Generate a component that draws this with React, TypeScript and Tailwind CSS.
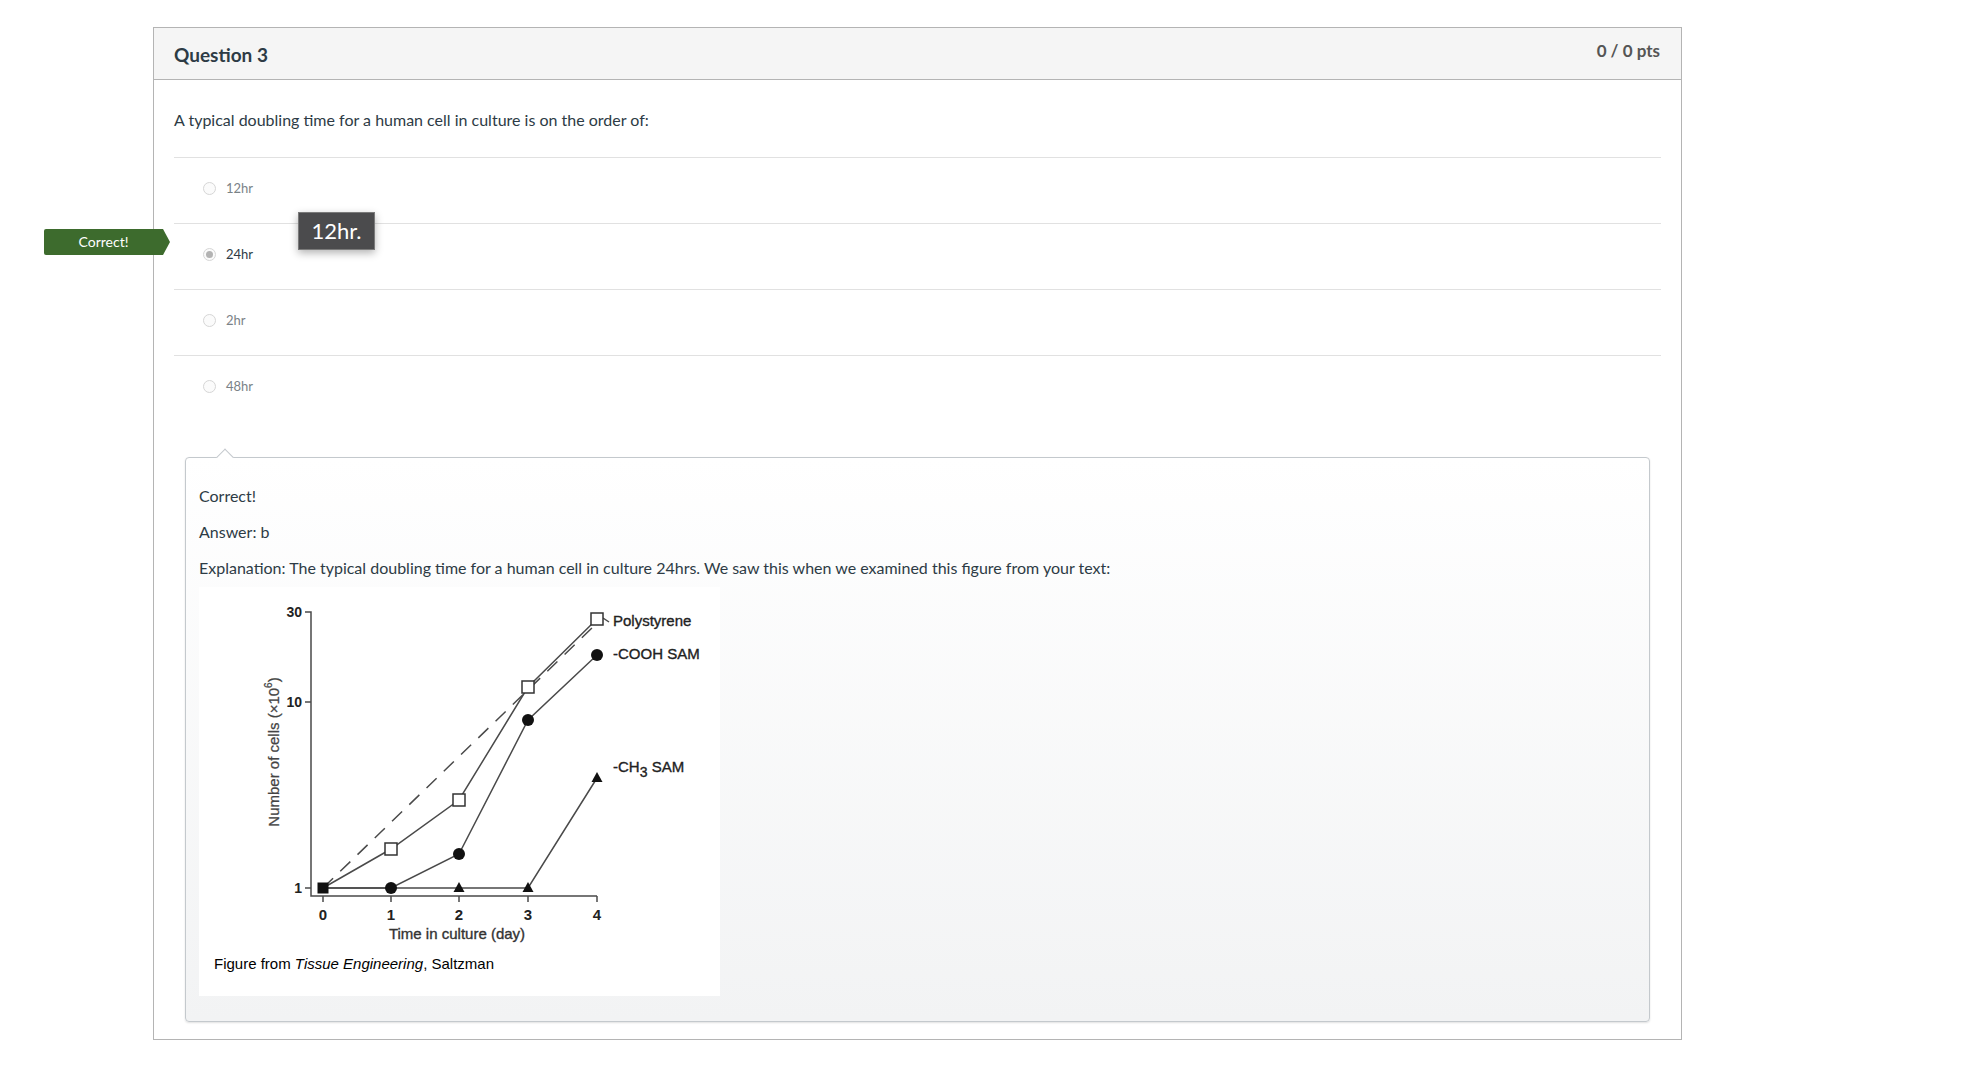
import React from 'react';

const chartFont = '"Liberation Sans", Arial, sans-serif';

const days = [323, 391, 459, 528, 597];
const polystyrene = [887, 848, 799, 686, 618];
const cooh = [887, 887, 853, 719, 654];
const ch3 = [887, 887, 887, 887, 777];

const toPoints = (ys: number[]) => ys.map((y, i) => `${days[i]},${y}`).join(' ');

const GrowthChart: React.FC = () => (
  <svg width={521} height={409} viewBox="199 586 521 409" className="block">
    <rect x={199} y={586} width={521} height={409} fill="#ffffff" />
    <g stroke="#4a4a4a" strokeWidth={1.5} fill="none">
      {/* axes */}
      <polyline points="305,611 311,611 311,895 597,895" />
      <line x1={305} y1={701} x2={311} y2={701} />
      <line x1={305} y1={887} x2={311} y2={887} />
      {days.map((x) => (
        <line key={x} x1={x} y1={895} x2={x} y2={901} />
      ))}
      {/* series */}
      <line x1={323} y1={887} x2={592} y2={627} strokeDasharray="14 10" />
      <polyline points={toPoints(polystyrene)} />
      <polyline points={toPoints(cooh)} />
      <polyline points={toPoints(ch3)} />
      <line x1={603} y1={617} x2={609} y2={621} />
    </g>
    {/* markers */}
    <rect x={317.5} y={881.5} width={11} height={11} fill="#111" />
    {polystyrene.slice(1).map((y, i) => (
      <rect key={i} x={days[i + 1] - 6} y={y - 6} width={12} height={12} fill="#fff" stroke="#333" strokeWidth={1.5} />
    ))}
    {cooh.slice(1).map((y, i) => (
      <circle key={i} cx={days[i + 1]} cy={y} r={6} fill="#111" />
    ))}
    {ch3.slice(2).map((y, i) => (
      <polygon key={i} points={`${days[i + 2]},${y - 6} ${days[i + 2] + 5.5},${y + 4} ${days[i + 2] - 5.5},${y + 4}`} fill="#111" />
    ))}
    {/* labels */}
    <g fontFamily={chartFont} fill="#222" fontWeight={700} fontSize={14} textAnchor="end" dominantBaseline="central">
      <text x={302} y={611}>30</text>
      <text x={302} y={701}>10</text>
      <text x={302} y={887}>1</text>
    </g>
    <g fontFamily={chartFont} fill="#222" fontWeight={700} fontSize={15} textAnchor="middle" dominantBaseline="central">
      {days.map((x, i) => (
        <text key={x} x={x} y={913}>{i}</text>
      ))}
    </g>
    <text
      x={457}
      y={932}
      fontFamily={chartFont}
      fontSize={15}
      fill="#333"
      stroke="#333"
      strokeWidth={0.35}
      textAnchor="middle"
      dominantBaseline="central"
    >
      Time in culture (day)
    </text>
    <text
      x={273}
      y={751}
      transform="rotate(-90 273 751)"
      fontFamily={chartFont}
      fontSize={15}
      fill="#444"
      stroke="#444"
      strokeWidth={0.25}
      textAnchor="middle"
      dominantBaseline="central"
    >
      Number of cells (×10<tspan dy={-5} fontSize={10}>6</tspan><tspan dy={5}>)</tspan>
    </text>
    <g fontFamily={chartFont} fontSize={15} fill="#222" stroke="#222" strokeWidth={0.35} dominantBaseline="central">
      <text x={613} y={619}>Polystyrene</text>
      <text x={613} y={652}>-COOH SAM</text>
      <text x={613} y={765}>
        -CH<tspan dy={6} fontSize={14}>3</tspan>
        <tspan dy={-6}> SAM</tspan>
      </text>
    </g>
    <text x={214} y={962} fontFamily={chartFont} fontSize={15} fill="#000" dominantBaseline="central">
      Figure from <tspan fontStyle="italic">Tissue Engineering</tspan>, Saltzman
    </text>
  </svg>
);

const Radio: React.FC<{ checked?: boolean }> = ({ checked }) => (
  <span className="w-[13px] h-[13px] rounded-full border border-[#d6d6d6] bg-[#fbfbfb] flex items-center justify-center shrink-0">
    {checked && <span className="w-[7px] h-[7px] rounded-full bg-[#b3b3b3]" />}
  </span>
);

const answers = [
  { label: '12hr', checked: false },
  { label: '24hr', checked: true },
  { label: '2hr', checked: false },
  { label: '48hr', checked: false },
];

export default function App() {
  return (
    <div className="min-h-screen bg-white font-['Lato','Noto_Sans',sans-serif] text-[#2d3b45]">
      <div className="pt-[27px] pl-[153px]">
        <div className="relative w-[1529px] border border-[#b4b4b4]">
          {/* header */}
          <div className="h-[52px] bg-[#f5f5f5] border-b border-[#b4b4b4] flex justify-between pl-[20px] pr-[21px]">
            <h2 className="pt-[15px] text-[19px] leading-[23px] font-bold text-[#2d3b45]">Question 3</h2>
            <span className="pt-[12px] text-[17px] leading-[21px] font-bold text-[#555]">0 / 0 pts</span>
          </div>

          <div className="pl-[20px] pr-[20px] pb-[17px]">
            <p className="pt-[28px] pb-[25px] text-[16px] leading-[24px]">
              A typical doubling time for a human cell in culture is on the order of:
            </p>

            <div>
              {answers.map((a) => (
                <div key={a.label} className="h-[66px] border-t border-[#e1e1e1] pt-[20px] pl-[29px] flex items-start">
                  <div className="flex items-center gap-[10px] h-[20px]">
                    <Radio checked={a.checked} />
                    <span className={`text-[13px] leading-[20px] ${a.checked ? 'text-[#2d3b45]' : 'text-[#7a8287]'}`}>{a.label}</span>
                  </div>
                </div>
              ))}
            </div>

            {/* feedback */}
            <div className="relative mt-[36px] ml-[11px] mr-[11px] rounded-[4px] border border-[#c4c9cd] bg-linear-to-b from-white to-[#f2f3f4] shadow-[0_1px_2px_rgba(0,0,0,0.12)] pl-[13px] pt-[26px] pb-[25px]">
              <span className="absolute left-[33px] -top-[7px] w-[12px] h-[12px] rotate-45 bg-white border-l border-t border-[#c4c9cd]" />
              <p className="text-[16px] leading-[24px] mb-[12px]">Correct!</p>
              <p className="text-[16px] leading-[24px] mb-[12px]">Answer: b</p>
              <p className="text-[16px] leading-[24px]">
                Explanation: The typical doubling time for a human cell in culture 24hrs. We saw this when we examined this figure from your text:
              </p>
              <div className="mt-[7px]">
                <GrowthChart />
              </div>
            </div>
          </div>

          {/* correct answer marker */}
          <div className="absolute left-[-110px] top-[201px] w-[126px] h-[26px] bg-[#3d6b2d] rounded-l-[2px] [clip-path:polygon(0_0,119px_0,126px_50%,119px_100%,0_100%)]">
            <span className="block w-[119px] text-center text-white text-[14px] leading-[26px]">Correct!</span>
          </div>

          {/* hover tooltip */}
          <div className="absolute left-[144px] top-[184px] w-[77px] h-[38px] bg-[#4b4b4d] border border-[#7a7a7a] shadow-[0_3px_8px_rgba(0,0,0,0.3)] flex items-center justify-center">
            <span className="text-white text-[22px] leading-none">12hr.</span>
          </div>
        </div>
      </div>
    </div>
  );
}
